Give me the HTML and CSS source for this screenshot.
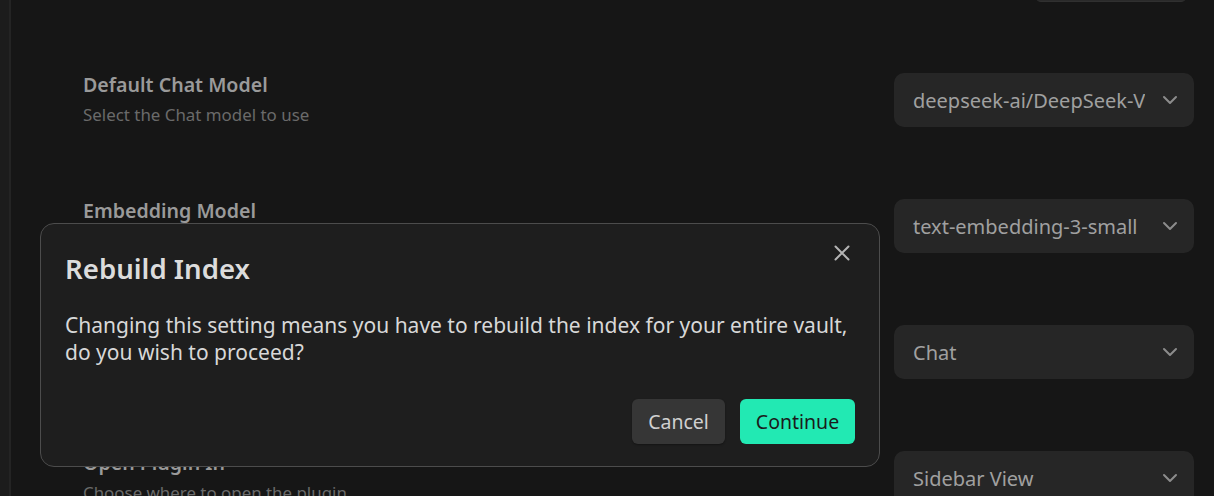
FILE: index.html
```html
<!DOCTYPE html>
<html lang="en">
<head>
<meta charset="utf-8">
<title>Settings</title>
<link rel="stylesheet" href="styles.css">
</head>
<body>
<div class="app">
  <div class="side"></div>
  <main class="main">
    <div class="top-actions"><div class="top-btn"></div></div>
    <div class="settings">
      <div class="setting-row">
        <div class="info">
          <div class="name">Default Chat Model</div>
          <div class="desc">Select the Chat model to use</div>
        </div>
        <div class="dropdown"><span class="value">deepseek-ai/DeepSeek-V3</span><svg class="chev" viewBox="0 0 16 10" width="16" height="10"><path d="M2 2 L8 8 L14 2" fill="none" stroke="currentColor" stroke-width="2" stroke-linecap="round" stroke-linejoin="round"/></svg></div>
      </div>
      <div class="setting-row">
        <div class="info">
          <div class="name">Embedding Model</div>
          <div class="desc">Select the embedding model to use</div>
        </div>
        <div class="dropdown"><span class="value">text-embedding-3-small</span><svg class="chev" viewBox="0 0 16 10" width="16" height="10"><path d="M2 2 L8 8 L14 2" fill="none" stroke="currentColor" stroke-width="2" stroke-linecap="round" stroke-linejoin="round"/></svg></div>
      </div>
      <div class="setting-row">
        <div class="info">
          <div class="name">Default Mode</div>
          <div class="desc">Select the default chat mode</div>
        </div>
        <div class="dropdown"><span class="value">Chat</span><svg class="chev" viewBox="0 0 16 10" width="16" height="10"><path d="M2 2 L8 8 L14 2" fill="none" stroke="currentColor" stroke-width="2" stroke-linecap="round" stroke-linejoin="round"/></svg></div>
      </div>
      <div class="setting-row">
        <div class="info">
          <div class="name">Open Plugin In</div>
          <div class="desc">Choose where to open the plugin</div>
        </div>
        <div class="dropdown"><span class="value">Sidebar View</span><svg class="chev" viewBox="0 0 16 10" width="16" height="10"><path d="M2 2 L8 8 L14 2" fill="none" stroke="currentColor" stroke-width="2" stroke-linecap="round" stroke-linejoin="round"/></svg></div>
      </div>
    </div>
  </main>
</div>

<div class="modal">
  <button class="modal-close" aria-label="Close"><svg viewBox="0 0 18 18" width="18" height="18"><path d="M2.5 2.5 L15.5 15.5 M15.5 2.5 L2.5 15.5" fill="none" stroke="currentColor" stroke-width="2" stroke-linecap="round"/></svg></button>
  <div class="modal-title">Rebuild Index</div>
  <div class="modal-body">Changing this setting means you have to rebuild the index for your entire vault,<br>do you wish to proceed?</div>
  <div class="modal-buttons">
    <button class="btn btn-cancel">Cancel</button>
    <button class="btn btn-cta">Continue</button>
  </div>
</div>
</body>
</html>
```
FILE: styles.css
```css
html, body {
  margin: 0;
  padding: 0;
  height: 100%;
  overflow: hidden;
  background: #161616;
  font-family: "Noto Sans", "Open Sans", sans-serif;
}

.app {
  display: flex;
  height: 496px;
}

.side {
  width: 9px;
  background: #1c1c1c;
  border-right: 2px solid #242424;
  flex: none;
}

.main {
  flex: 1;
  display: flex;
  flex-direction: column;
}

.top-actions {
  display: flex;
  justify-content: flex-end;
  margin-top: -40px;
  padding-right: 27px;
}

.top-btn {
  width: 150px;
  height: 40px;
  background: #2a2a2a;
  border: 1px solid #303030;
  border-radius: 6px;
}

.settings {
  padding-top: 35px;
  display: flex;
  flex-direction: column;
}

.setting-row {
  display: flex;
  align-items: center;
  justify-content: space-between;
  padding: 36px 20px 36px 72px;
}

.info {
  display: flex;
  flex-direction: column;
  gap: 6px;
}

.name {
  font-size: 19.6px;
  font-weight: 600;
  color: #9a9a9a;
  line-height: 24px;
}

.desc {
  font-size: 16.9px;
  color: #6a6a6a;
  line-height: 24px;
}

.dropdown {
  width: 300px;
  height: 54px;
  box-sizing: border-box;
  background: #262626;
  border-radius: 10px;
  display: flex;
  align-items: center;
  padding: 0 16px 0 19px;
  color: #a0a0a0;
}

.dropdown .value {
  flex: 1;
  overflow: hidden;
  white-space: nowrap;
  font-size: 20px;
  margin-right: 17px;
}

.chev {
  color: #8c8c8c;
  flex: none;
}

.modal {
  position: absolute;
  left: 40px;
  top: 223px;
  width: 840px;
  height: 244px;
  box-sizing: border-box;
  background: #1e1e1e;
  border: 1px solid #4c4c4c;
  border-radius: 14px;
  padding: 27px 24px 22px 24px;
  display: flex;
  flex-direction: column;
  color: #dadada;
}

.modal-close {
  position: absolute;
  top: 20px;
  right: 28px;
  background: none;
  border: none;
  padding: 0;
  width: 18px;
  height: 18px;
  color: #b4b4b4;
  display: flex;
}

.modal-title {
  font-size: 27.6px;
  font-weight: 600;
  line-height: 34px;
  color: #dcdcdc;
}

.modal-body {
  margin-top: 27px;
  font-size: 21px;
  line-height: 27px;
  color: #d8d8d8;
}

.modal-buttons {
  margin-top: auto;
  display: flex;
  justify-content: flex-end;
  gap: 15px;
}

.btn {
  height: 45px;
  border: none;
  border-radius: 6px;
  font-family: inherit;
  font-size: 19.5px;
  padding: 0;
  display: flex;
  align-items: center;
  justify-content: center;
}

.btn-cancel {
  width: 93px;
  background: #363636;
  color: #d0d0d0;
  box-shadow: 0 1px 2px rgba(0,0,0,0.35);
}

.btn-cta {
  width: 115px;
  background: #22e9b3;
  color: #1b1b1b;
}
```
